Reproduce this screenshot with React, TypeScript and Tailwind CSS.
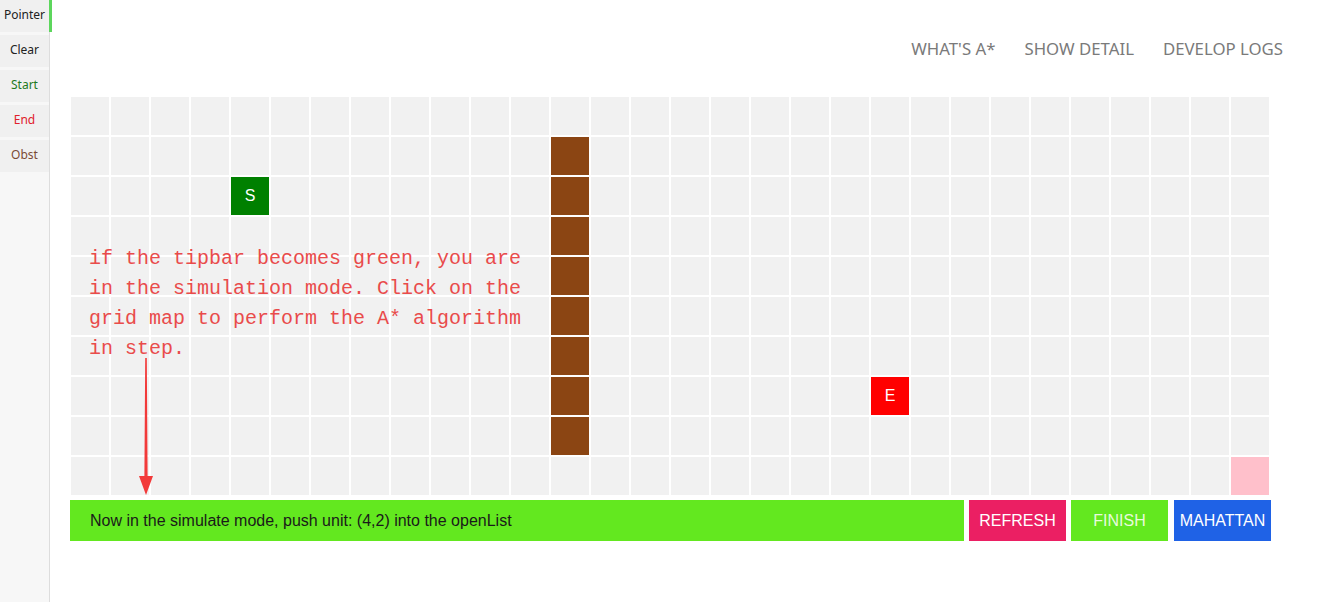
const COLS = 30
const ROWS = 10

type Cell = { bg: string; label?: string }

function cellAt(r: number, c: number): Cell {
  if (c === 12 && r >= 1 && r <= 8) return { bg: 'bg-[#8b4513]' }
  if (r === 2 && c === 4) return { bg: 'bg-[#008000]', label: 'S' }
  if (r === 7 && c === 20) return { bg: 'bg-[#ff0000]', label: 'E' }
  if (r === 9 && c === 29) return { bg: 'bg-[#ffc0cb]' }
  return { bg: 'bg-[#f1f1f1]' }
}

const tools = [
  { name: 'Pointer', color: 'text-[#222]', active: true },
  { name: 'Clear', color: 'text-[#222]' },
  { name: 'Start', color: 'text-[#1e7a1e]' },
  { name: 'End', color: 'text-[#e0202a]' },
  { name: 'Obst', color: 'text-[#7a4b36]' },
]

function App() {
  const cells = []
  for (let r = 0; r < ROWS; r++) {
    for (let c = 0; c < COLS; c++) {
      const cell = cellAt(r, c)
      cells.push(
        <div key={r + '-' + c} className={`w-[40px] h-[40px] border border-white flex items-center justify-center text-white text-[16px] ${cell.bg}`}>
          {cell.label}
        </div>
      )
    }
  }

  return (
    <div className="flex min-h-screen bg-white font-['Noto_Sans',sans-serif]">
      {/* tool bar */}
      <div className="w-[50px] shrink-0 bg-[#f7f7f7] border-r border-[#dddddd] flex flex-col">
        {tools.map(t => (
          <div key={t.name} className={`relative h-[32px] mb-[3px] bg-[#f0f0f0] flex items-center justify-center text-[12px] pb-[3px] ${t.color}`}>
            {t.name}
            {t.active && <span className="absolute right-[-3px] top-0 w-[3px] h-[32px] bg-[#5cd65c]" />}
          </div>
        ))}
      </div>

      <div className="flex-1 pl-[20px]">
        <nav className="flex justify-end gap-[29px] pr-[52px] pt-[36px] h-[96px] text-[16.8px] text-[#7a7a7a]">
          <a href="#">WHAT'S A*</a>
          <a href="#">SHOW DETAIL</a>
          <a href="#">DEVELOP LOGS</a>
        </nav>

        <div className="relative w-[1200px]">
          <div className="grid grid-cols-[repeat(30,40px)] font-['Liberation_Sans',sans-serif]">
            {cells}
          </div>
          <p className="absolute left-[19px] top-[148px] w-[440px] font-['Liberation_Mono',monospace] text-[20px] leading-[30px] text-[#e94b4b]">
            if the tipbar becomes green, you are in the simulation mode. Click on the grid map to perform the A* algorithm in step.
          </p>
          <svg className="absolute left-[68px] top-[262px]" width="16" height="138" viewBox="0 0 16 138">
            <path d="M7.2 0 L8.8 0 L9.6 118 L15 118 L8 137 L1 118 L6.4 118 Z" fill="#f23a3a" />
          </svg>
        </div>

        <div className="flex gap-[5px] mt-[4px] h-[41px] font-['Liberation_Sans',sans-serif] text-[16px]">
          <div className="w-[894px] bg-[#63e81f] text-[#1a1a1a] flex items-center pl-[20px]">
            Now in the simulate mode, push unit: (4,2) into the openList
          </div>
          <button className="w-[97px] bg-[#eb1f63] text-white">REFRESH</button>
          <button className="w-[97px] bg-[#63e81f] text-[#e8fadc]">FINISH</button>
          <button className="w-[97px] ml-[1px] bg-[#1f62e6] text-white">MAHATTAN</button>
        </div>
      </div>
    </div>
  )
}

export default App
